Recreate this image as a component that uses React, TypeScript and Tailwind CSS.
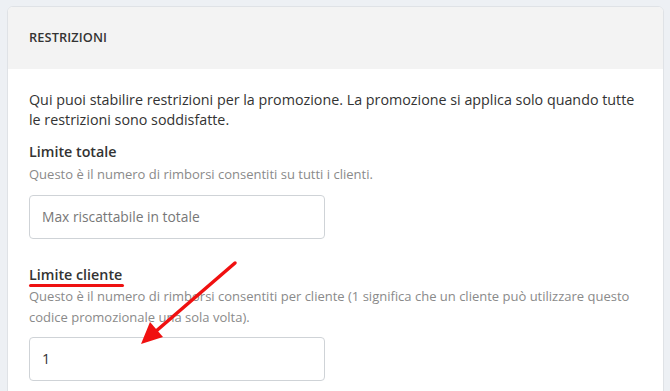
export default function App() {
  return (
    <div
      className="relative w-[670px] h-[391px] overflow-hidden bg-[#edf0f4] pt-[6px] pl-[7px] pr-[6px]"
      style={{ fontFamily: '"Open Sans", "Liberation Sans", sans-serif' }}
    >
      <div className="h-[400px] rounded-t-[6px] border border-[#dfe2e6] bg-white overflow-hidden">
        {/* Header */}
        <div className="h-[62px] bg-[#f3f3f3] px-[21px] flex items-center">
          <span className="text-[12.8px] font-semibold text-[#333] tracking-[0.1px]">RESTRIZIONI</span>
        </div>

        {/* Body */}
        <div className="px-[21px] pt-[21px]">
          <p className="text-[14.3px] leading-[20px] text-[#333]">
            Qui puoi stabilire restrizioni per la promozione. La promozione si applica solo quando tutte le restrizioni
            sono soddisfatte.
          </p>

          <div className="mt-[11px] text-[14.3px] leading-[22px] font-semibold text-[#333]">Limite totale</div>
          <div className="mt-[1px] text-[13px] leading-[20px] text-[#8a8a8a]">
            Questo è il numero di rimborsi consentiti su tutti i clienti.
          </div>
          <div className="mt-[11px] w-[296px] h-[44px] rounded-[4px] border border-[#cfd3d7] flex items-center px-[12px]">
            <span className="text-[13.8px] text-[#777]">Max riscattabile in totale</span>
          </div>

          <div className="mt-[25px] text-[14.3px] leading-[22px] font-semibold text-[#333]">
            <span className="relative inline-block">
              Limite cliente
              <span className="absolute left-0 right-[-2px] top-[20px] h-[3px] rounded-full bg-[#ee1111]" />
            </span>
          </div>
          <div className="mt-0 text-[13px] leading-[21px] text-[#8a8a8a] pr-[10px]">
            Questo è il numero di rimborsi consentiti per cliente (1 significa che un cliente può utilizzare questo codice
            promozionale una sola volta).
          </div>
          <div className="mt-[9px] w-[296px] h-[44px] rounded-[4px] border border-[#cfd3d7] flex items-center px-[12px]">
            <span className="text-[14.3px] text-[#333]">1</span>
          </div>
        </div>
      </div>

      {/* Annotation arrow */}
      <svg className="absolute left-0 top-0 pointer-events-none" width="670" height="391" viewBox="0 0 670 391">
        <line x1="235" y1="263" x2="155" y2="332" stroke="#f01010" strokeWidth="3.5" strokeLinecap="round" />
        <polygon points="141,344 150,322 163,337" fill="#f01010" />
      </svg>
    </div>
  );
}
